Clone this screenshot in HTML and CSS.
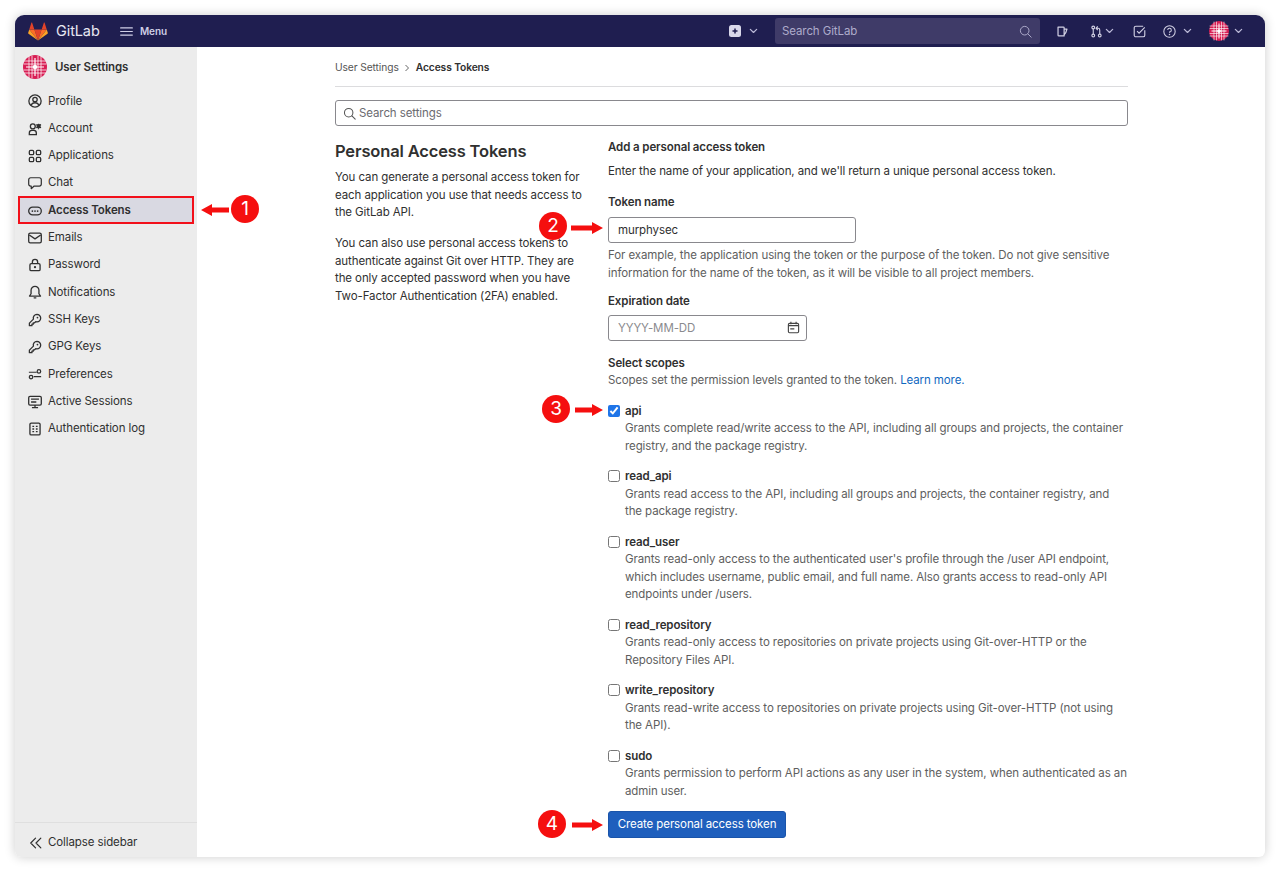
FILE: index.html
```html
<!DOCTYPE html>
<html lang="en">
<head>
<meta charset="utf-8">
<title>Access Tokens</title>
<link rel="stylesheet" href="styles.css">
</head>
<body>
<svg class="defs" width="0" height="0">
  <defs>
    <symbol id="globe" viewBox="0 0 32 32">
      <circle cx="16" cy="16" r="16" fill="#d81e54"/>
      <g stroke="#fff" fill="none">
        <path stroke-width="1" d="M1 8h30M1 12h30M1 20h30M1 24h30M8 1v30M12 1v30M20 1v30M24 1v30"/>
        <path stroke-width="1.6" d="M4 16h24M16 4v24"/>
      </g>
      <g fill="#b5123f"><rect x="9" y="9" width="2" height="2"/><rect x="21" y="9" width="2" height="2"/><rect x="9" y="21" width="2" height="2"/><rect x="21" y="21" width="2" height="2"/></g>
      <circle cx="16" cy="16" r="3" fill="#fff"/>
    </symbol>
    <symbol id="chev" viewBox="0 0 10 6"><path d="M1.500 1.200 5 4.600l3.500-3.400" fill="none" stroke="currentColor" stroke-width="1.400" stroke-linecap="round" stroke-linejoin="round"/></symbol>
    <symbol id="key" viewBox="0 0 16 16"><g fill="none" stroke="currentColor" stroke-width="1.500" stroke-linejoin="round" stroke-linecap="round"><path d="M10.200 1.500a4.300 4.300 0 0 1 0 8.600c-.5 0-1-.1-1.400-.2L7.500 11.200H6v1.600H4.500v1.700H1.600v-2.900l4.600-4.600a4.300 4.300 0 0 1 4-5.500z"/></g><circle cx="10.800" cy="5.200" r="1" fill="currentColor"/></symbol>
  </defs>
</svg>

<div class="window">
  <header class="nav">
    <svg class="logo" viewBox="0 0 24 23" aria-hidden="true">
      <path d="M12 22.500 16.400 9H7.600z" fill="#e24329"/>
      <path d="M12 22.500 7.600 9H1.400z" fill="#fc6d26"/>
      <path d="M1.400 9 .1 13c-.1.4 0 .8.4 1.100L12 22.500z" fill="#fca326"/>
      <path d="M1.400 9h6.200L4.900 1c-.1-.4-.7-.4-.9 0z" fill="#e24329"/>
      <path d="M12 22.500 16.400 9h6.200z" fill="#fc6d26"/>
      <path d="m22.600 9 1.300 4c.1.4 0 .8-.4 1.100L12 22.500z" fill="#fca326"/>
      <path d="M22.600 9h-6.200l2.700-8c.1-.4.7-.4.9 0z" fill="#e24329"/>
    </svg>
    <span class="brand">GitLab</span>
    <svg class="menu-ico" viewBox="0 0 14 10"><path d="M.5 1h13M.5 5h13M.5 9h13" stroke="currentColor" stroke-width="1.300" stroke-linecap="round"/></svg>
    <span class="menu-text">Menu</span>
    <div class="spacer"></div>
    <svg class="plus" viewBox="0 0 12 12"><rect width="12" height="12" rx="2.500" fill="#d9d8ea"/><path d="M6 3.500v5M3.500 6h5" stroke="#1f1d4f" stroke-width="1.500"/></svg>
    <svg class="chev chev-plus"><use href="#chev"/></svg>
    <div class="search">
      <span>Search GitLab</span>
      <svg class="n-ico" viewBox="0 0 16 16"><circle cx="7" cy="7" r="5.300" fill="none" stroke="currentColor" stroke-width="1.200"/><path d="m11 11 4 4" stroke="currentColor" stroke-width="1.200" stroke-linecap="round"/></svg>
    </div>
    <svg class="n-ico ni-issue" viewBox="0 0 16 16"><path d="M2.500 2.500h6.500a1 1 0 0 1 1 1v10H3.500a1 1 0 0 1-1-1z M10 5h3.500L12 9.500 10 12" fill="none" stroke="currentColor" stroke-width="1.500" stroke-linejoin="round"/></svg>
    <svg class="n-ico ni-mr" viewBox="0 0 16 16"><g fill="none" stroke="currentColor" stroke-width="1.400"><circle cx="4" cy="3" r="1.700"/><circle cx="4" cy="13" r="1.700"/><circle cx="12" cy="13" r="1.700"/><path d="M4 4.700v6.600M12 11.300V6a2 2 0 0 0-2-2H8M9.500 1.800 7.500 4l2 2.200"/></g></svg>
    <svg class="chev chev-mr"><use href="#chev"/></svg>
    <svg class="n-ico ni-todo" viewBox="0 0 16 16"><path d="M14.500 6.500v6a2 2 0 0 1-2 2h-9a2 2 0 0 1-2-2v-9a2 2 0 0 1 2-2h9" fill="none" stroke="currentColor" stroke-width="1.400"/><path d="m5 7.500 2.500 2.500 7-7" fill="none" stroke="currentColor" stroke-width="1.400"/></svg>
    <svg class="n-ico ni-help" viewBox="0 0 16 16"><circle cx="8" cy="8" r="7" fill="none" stroke="currentColor" stroke-width="1.300"/><path d="M5.800 6.200A2.200 2.200 0 1 1 8 8.500v1" fill="none" stroke="currentColor" stroke-width="1.300"/><circle cx="8" cy="11.700" r=".9" fill="currentColor"/></svg>
    <svg class="chev chev-help"><use href="#chev"/></svg>
    <svg class="avatar-sm"><use href="#globe"/></svg>
    <svg class="chev chev-av"><use href="#chev"/></svg>
  </header>

  <div class="body">
    <aside class="sidebar">
      <div class="side-head">
        <svg class="avatar-lg"><use href="#globe"/></svg>
        <span>User Settings</span>
      </div>
      <nav class="side-list">
        <a class="side-item"><svg class="s-ico" viewBox="0 0 16 16"><g fill="none" stroke="currentColor" stroke-width="1.500"><circle cx="8" cy="8" r="7"/><circle cx="8" cy="6.300" r="2.500"/><path d="M3.500 13c.8-2 2.500-3 4.500-3s3.700 1 4.500 3"/></g></svg>Profile</a>
        <a class="side-item"><svg class="s-ico" viewBox="0 0 16 16"><g fill="none" stroke="currentColor" stroke-width="1.500"><circle cx="5.500" cy="5" r="2.800"/><path d="M1.500 14.500v-2a3 3 0 0 1 3-3h2a3 3 0 0 1 3 3v2z"/></g><path d="M12.500 2l1 .6 1-.3.7 1.200-.8.7v1.100l.8.7-.7 1.200-1-.3-1 .6-.3 1h-.4l-.3-1-1-.6-1 .3-.3-1.200.7-.7V4.200l-.7-.7.7-1.200 1 .3 1-.6z" fill="currentColor"/></svg>Account</a>
        <a class="side-item"><svg class="s-ico" viewBox="0 0 16 16"><g fill="none" stroke="currentColor" stroke-width="1.500"><rect x="1.500" y="1.500" width="5" height="5" rx="1.500"/><rect x="9.500" y="1.500" width="5" height="5" rx="1.500"/><rect x="1.500" y="9.500" width="5" height="5" rx="1.500"/><rect x="9.500" y="9.500" width="5" height="5" rx="1.500"/></g></svg>Applications</a>
        <a class="side-item"><svg class="s-ico" viewBox="0 0 16 16"><path d="M3 2h10a2.200 2.200 0 0 1 2.200 2.200v5A2.200 2.200 0 0 1 13 11.500H7l-3.300 3v-3H3A2.200 2.200 0 0 1 .8 9.200v-5A2.200 2.200 0 0 1 3 2z" fill="none" stroke="currentColor" stroke-width="1.400" stroke-linejoin="round"/></svg>Chat</a>
        <a class="side-item active"><svg class="s-ico" viewBox="0 0 16 16"><rect x=".8" y="3.500" width="14.400" height="9" rx="4.500" fill="none" stroke="currentColor" stroke-width="1.500"/><circle cx="5" cy="8" r="1" fill="currentColor"/><circle cx="8" cy="8" r="1" fill="currentColor"/><circle cx="11" cy="8" r="1" fill="currentColor"/></svg>Access Tokens</a>
        <a class="side-item"><svg class="s-ico" viewBox="0 0 16 16"><g fill="none" stroke="currentColor" stroke-width="1.500" stroke-linejoin="round"><rect x=".8" y="2.500" width="14.400" height="11" rx="1.800"/><path d="m1.500 4.500 6.500 4.500 6.500-4.500"/></g></svg>Emails</a>
        <a class="side-item"><svg class="s-ico" viewBox="0 0 16 16"><g fill="none" stroke="currentColor" stroke-width="1.500"><rect x="2.200" y="6.500" width="11.600" height="8" rx="1.500"/><path d="M5 6.500V4.500a3 3 0 0 1 6 0v2"/></g><circle cx="8" cy="10.500" r="1.300" fill="currentColor"/></svg>Password</a>
        <a class="side-item"><svg class="s-ico" viewBox="0 0 16 16"><path d="M8 1.500a4.500 4.500 0 0 1 4.500 4.500v4l1.800 2.700H1.700L3.500 10V6A4.500 4.500 0 0 1 8 1.500zM6.500 14.800h3" fill="none" stroke="currentColor" stroke-width="1.500" stroke-linejoin="round"/></svg>Notifications</a>
        <a class="side-item"><svg class="s-ico"><use href="#key"/></svg>SSH Keys</a>
        <a class="side-item"><svg class="s-ico"><use href="#key"/></svg>GPG Keys</a>
        <a class="side-item"><svg class="s-ico" viewBox="0 0 16 16"><g fill="none" stroke="currentColor" stroke-width="1.400"><path d="M1 6h9M6.500 11H15"/><circle cx="12.500" cy="5" r="2"/><circle cx="3.500" cy="11.500" r="2"/></g></svg>Preferences</a>
        <a class="side-item"><svg class="s-ico" viewBox="0 0 16 16"><g fill="none" stroke="currentColor" stroke-width="1.500"><rect x=".8" y="1.500" width="14.400" height="10" rx="1.500"/><path d="M8 11.500v3M4.500 14.500h7"/><path d="M3.500 4.800h9M3.500 8h6"/></g></svg>Active Sessions</a>
        <a class="side-item"><svg class="s-ico" viewBox="0 0 16 16"><rect x="2.200" y="1.200" width="11.600" height="13.600" rx="1.500" fill="none" stroke="currentColor" stroke-width="1.500"/><path d="M5 5h2M9 5h2M5 8h2M9 8h2M5 11h2M9 11h2" stroke="currentColor" stroke-width="1.500"/></svg>Authentication log</a>
      </nav>
      <div class="side-foot"><svg class="s-ico" viewBox="0 0 16 16"><path d="M7.500 2.500 2 8l5.500 5.500M13.500 2.500 8 8l5.500 5.500" fill="none" stroke="currentColor" stroke-width="1.400" stroke-linecap="round" stroke-linejoin="round"/></svg>Collapse sidebar</div>
    </aside>

    <main class="main">
      <div class="crumbs"><span>User Settings</span><svg class="crumb-sep" viewBox="0 0 6 10"><path d="m1.500 2 3 3-3 3" fill="none" stroke="currentColor" stroke-width="1"/></svg><b>Access Tokens</b></div>
      <div class="settings-search">
        <svg viewBox="0 0 16 16"><circle cx="7" cy="7" r="5.200" fill="none" stroke="currentColor" stroke-width="1.300"/><path d="m11 11 4 4" stroke="currentColor" stroke-width="1.300" stroke-linecap="round"/></svg>
        <input type="text" placeholder="Search settings">
      </div>
      <div class="columns">
        <section class="intro">
          <h2>Personal Access Tokens</h2>
          <p>You can generate a personal access token for each application you use that needs access to the GitLab API.</p>
          <p>You can also use personal access tokens to authenticate against Git over HTTP. They are the only accepted password when you have Two-Factor Authentication (2FA) enabled.</p>
        </section>
        <form class="form">
          <h5>Add a personal access token</h5>
          <p class="lead">Enter the name of your application, and we'll return a unique personal access token.</p>
          <label class="field-label first">Token name</label>
          <input class="text-input name-input" type="text" value="murphysec">
          <p class="hint">For example, the application using the token or the purpose of the token. Do not give sensitive information for the name of the token, as it will be visible to all project members.</p>
          <label class="field-label exp">Expiration date</label>
          <div class="date-wrap">
            <input class="text-input date-input" type="text" placeholder="YYYY-MM-DD">
            <svg viewBox="0 0 16 16"><g fill="none" stroke="currentColor" stroke-width="1.400"><rect x="1.700" y="3" width="12.600" height="11.500" rx="1.500"/><path d="M4.800 1v3M11.200 1v3"/></g><path d="M1.700 6.500h12.600V5H1.700zM4 9h5v1.400H4z" fill="currentColor"/></svg>
          </div>
          <label class="field-label scopes-title">Select scopes</label>
          <p class="scopes-sub">Scopes set the permission levels granted to the token. <a>Learn more.</a></p>
          <div class="scope first-scope">
            <input type="checkbox" checked>
            <div><strong>api</strong><span>Grants complete read/write access to the API, including all groups and projects, the container registry, and the package registry.</span></div>
          </div>
          <div class="scope">
            <input type="checkbox">
            <div><strong>read_api</strong><span>Grants read access to the API, including all groups and projects, the container registry, and the package registry.</span></div>
          </div>
          <div class="scope">
            <input type="checkbox">
            <div><strong>read_user</strong><span>Grants read-only access to the authenticated user's profile through the /user API endpoint, which includes username, public email, and full name. Also grants access to read-only API endpoints under /users.</span></div>
          </div>
          <div class="scope">
            <input type="checkbox">
            <div><strong>read_repository</strong><span>Grants read-only access to repositories on private projects using Git-over-HTTP or the Repository Files API.</span></div>
          </div>
          <div class="scope">
            <input type="checkbox">
            <div><strong>write_repository</strong><span>Grants read-write access to repositories on private projects using Git-over-HTTP (not using the API).</span></div>
          </div>
          <div class="scope">
            <input type="checkbox">
            <div><strong>sudo</strong><span>Grants permission to perform API actions as any user in the system, when authenticated as an admin user.</span></div>
          </div>
          <button class="primary" type="button">Create personal access token</button>
        </form>
      </div>
    </main>
  </div>
</div>

<div class="mark-box"></div>
<div class="badge b1">1</div>
<div class="badge b2">2</div>
<div class="badge b3">3</div>
<div class="badge b4">4</div>
<svg class="arrow a1" viewBox="0 0 28 12"><path d="M28 3.500H11V0L0 6l11 6V8.500h17z" fill="#f50f0f"/></svg>
<svg class="arrow a2" viewBox="0 0 32 12"><path d="M0 3.500h21V0l11 6-11 6V8.500H0z" fill="#f50f0f"/></svg>
<svg class="arrow a3" viewBox="0 0 28 12"><path d="M0 3.500h17V0l11 6-11 6V8.500H0z" fill="#f50f0f"/></svg>
<svg class="arrow a4" viewBox="0 0 31 12"><path d="M0 3.500h20V0l11 6-11 6V8.500H0z" fill="#f50f0f"/></svg>
</body>
</html>
```

FILE: styles.css
```css
* { box-sizing: border-box; }
html, body { margin: 0; height: 100%; }
body {
  background: #fff;
  font-family: Inter, "Liberation Sans", sans-serif;
  font-size: 11.5px;
  letter-spacing: -.1px;
  line-height: 17.5px;
  color: #303030;
  padding: 15px;
  position: relative;
  overflow: hidden;
}
.defs { position: absolute; }

.window {
  height: 842px;
  border-radius: 9px 9px 6px 6px;
  box-shadow: 0 0 11px rgba(0, 0, 0, .2);
  overflow: hidden;
  display: flex;
  flex-direction: column;
  background: #fff;
}

.nav {
  height: 32px;
  flex: none;
  background: #1f1e50;
  color: #d1d0e3;
  display: flex;
  align-items: center;
  padding-left: 13px;
}
.logo { width: 20px; height: 19px; margin-right: 8px; }
.brand { font-size: 14.5px; font-weight: 400; color: #e8e7f2; width: 45px; }
.menu-ico { width: 13px; height: 9px; margin-left: 19px; color: #cfcee6; }
.menu-text { margin-left: 7px; font-size: 10px; font-weight: 600; color: #cfcee6; padding-top: 1px; }
.spacer { flex: 1; }
.plus { width: 12px; height: 12px; }
.chev { width: 9px; height: 6px; flex: none; color: #b9b7d6; }
.chev-plus { margin-left: 8px; }
.search {
  width: 265px;
  height: 26px;
  margin-left: 17px;
  background: #3f3b68;
  border-radius: 3px;
  color: #aeabcb;
  display: flex;
  align-items: center;
  justify-content: space-between;
  padding: 1px 8px 0 7px;
}
.n-ico { width: 13px; height: 13px; flex: none; color: #d1d0e3; }
.search .n-ico { color: #aeabcb; }
.ni-issue { margin-left: 16px; }
.ni-mr { margin-left: 21px; }
.chev-mr { margin-left: 2px; }
.ni-todo { margin-left: 19px; }
.ni-help { margin-left: 17px; }
.chev-help { margin-left: 7px; }
.avatar-sm { width: 20px; height: 20px; margin-left: 17px; }
.chev-av { margin-left: 5px; margin-right: 22px; }

.body { flex: 1; display: flex; min-height: 0; }

.sidebar {
  width: 182px;
  flex: none;
  background: #ececec;
  display: flex;
  flex-direction: column;
}
.side-head {
  display: flex;
  align-items: center;
  height: 38px;
  padding: 1px 0 0 8px;
  font-weight: 600;
  color: #303030;
}
.side-head span { padding-top: 2px; }
.avatar-lg { width: 24px; height: 24px; margin-right: 8px; }
.side-list { flex: 1; padding: 2.7px 4px 0; }
.side-item {
  display: flex;
  align-items: center;
  height: 27.3px;
  padding-left: 9px;
  color: #303030;
}
.side-item.active {
  background: #d9d9e2;
  font-weight: 600;
}
.s-ico { width: 14px; height: 14px; flex: none; margin-right: 6px; color: #303030; }
.side-foot {
  height: 35px;
  border-top: 1px solid #dfdfdf;
  display: flex;
  align-items: center;
  padding: 5px 0 0 14px;
  color: #303030;
}
.side-foot .s-ico { margin-right: 5px; }

.main { flex: 1; padding: 0 137px 0 138px; min-width: 0; }

.crumbs {
  height: 39.5px;
  border-bottom: 1px solid #dcdcde;
  display: flex;
  align-items: center;
  font-size: 10.25px;
  color: #555;
  padding-top: 3px;
}
.crumbs b { font-weight: 600; color: #303030; }
.crumb-sep { width: 6px; height: 10px; margin: 0 6px 0 5px; color: #666; }

.settings-search {
  margin-top: 13.5px;
  height: 26px;
  border: 1px solid #89888d;
  border-radius: 3px;
  display: flex;
  align-items: center;
  padding: 0 0 0 7px;
  color: #555;
}
.settings-search svg { width: 13px; height: 13px; margin-right: 3px; }
.settings-search input {
  flex: 1;
  border: 0;
  outline: 0;
  padding: 1px 0 0;
  font: inherit;
  letter-spacing: inherit;
  background: transparent;
}
.settings-search input::placeholder { color: #6b6b70; }

.columns { display: flex; margin-top: 13px; }
.intro { width: 273px; padding-right: 22px; flex: none; }
.intro h2 {
  margin: 1px 0 7px;
  font-size: 16.5px;
  line-height: 22px;
  font-weight: 600;
  letter-spacing: -.15px;
  color: #303030;
}
.intro p { margin: 0 0 13.5px; }

.form { flex: 1; min-width: 0; }
.form h5 { margin: 0; font-size: 11.5px; line-height: 17.5px; font-weight: 600; }
.lead { margin: 6.5px 0 0; }
.field-label { display: block; font-weight: 600; }
.field-label.first { margin-top: 13.5px; }
.text-input {
  display: block;
  height: 26px;
  border: 1px solid #89888d;
  border-radius: 3px;
  padding: 0 9px;
  font: inherit;
  letter-spacing: inherit;
  color: #303030;
  background: #fff;
  outline: 0;
}
.name-input { width: 248px; margin-top: 5px; }
.hint { margin: 4.5px 0 0; color: #5e5e5e; }
.exp { margin-top: 11px; }
.date-wrap { position: relative; width: 199px; margin-top: 4px; }
.date-input { width: 100%; }
.date-input::placeholder { color: #8a8a8e; }
.date-wrap svg {
  position: absolute;
  right: 7px;
  top: 6px;
  width: 13px;
  height: 13px;
  color: #444;
}
.scopes-title { margin-top: 14px; }
.scopes-sub { margin: 0; color: #5e5e5e; }
.scopes-sub a { color: #1068bf; }

.scope { display: flex; margin-top: 13px; }
.first-scope { margin-top: 13px; }
.scope input {
  width: 12px;
  height: 12px;
  margin: 2px 5px 0 0;
  flex: none;
  accent-color: #1f75e8;
}
.scope strong { display: block; font-weight: 600; }
.scope span { display: block; color: #5e5e5e; }

.primary {
  display: block;
  margin-top: 11px;
  width: 178px;
  height: 27px;
  background: #1f5fbd;
  border: 1px solid #1a54aa;
  border-radius: 3px;
  color: #fff;
  font: inherit;
  letter-spacing: inherit;
  padding: 1px 0 0;
}

.mark-box {
  position: absolute;
  left: 18px;
  top: 196px;
  width: 176px;
  height: 28px;
  border: 2px solid #f2101a;
}
.badge {
  position: absolute;
  width: 28px;
  height: 28px;
  border-radius: 50%;
  background: #f50f0f;
  color: #fff;
  font-size: 19px;
  line-height: 28px;
  text-align: center;
  letter-spacing: 0;
}
.b1 { left: 231px; top: 195px; }
.b2 { left: 539px; top: 212px; }
.b3 { left: 542px; top: 395px; }
.b4 { left: 538px; top: 810px; }
.arrow { position: absolute; height: 12px; }
.a1 { left: 201px; top: 204px; width: 28px; }
.a2 { left: 571px; top: 222px; width: 32px; }
.a3 { left: 575px; top: 404px; width: 28px; }
.a4 { left: 572px; top: 819px; width: 31px; }
```
